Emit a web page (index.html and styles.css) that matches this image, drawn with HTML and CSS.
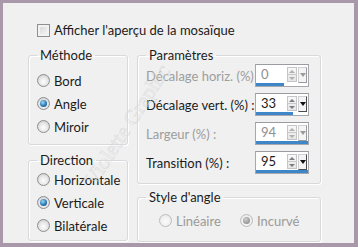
FILE: index.html
```html
<!DOCTYPE html>
<html>
<head>
    <meta charset="utf-8">
    <title>Mosaïque</title>
    <link rel="stylesheet" href="styles.css">
</head>
<body>
<div class="dlg">
    <div class="check"><span class="box"></span>Afficher l'aperçu de la mosaïque</div>

    <div class="cols">
        <div class="col left">
            <fieldset class="grp methode">
                <legend>Méthode</legend>
                <div class="opt"><span class="radio"></span>Bord</div>
                <div class="opt"><span class="radio on"></span>Angle</div>
                <div class="opt"><span class="radio"></span>Miroir</div>
            </fieldset>
            <fieldset class="grp direction">
                <legend>Direction</legend>
                <div class="opt"><span class="radio"></span>Horizontale</div>
                <div class="opt"><span class="radio on"></span>Verticale</div>
                <div class="opt"><span class="radio"></span>Bilatérale</div>
            </fieldset>
        </div>

        <div class="col right">
            <fieldset class="grp params">
                <legend>Paramètres</legend>
                <div class="row off">
                    <span class="lbl">Décalage horiz. (%) :</span>
                    <div class="spin">
                        <div class="top"><span class="val">0</span><span class="updown"><i class="up"></i><i class="dn"></i></span><span class="drop"></span></div>
                        <div class="bar" style="width: 28px"></div>
                    </div>
                </div>
                <div class="row">
                    <span class="lbl">Décalage vert. (%) :</span>
                    <div class="spin">
                        <div class="top"><span class="val">33</span><span class="updown"><i class="up"></i><i class="dn"></i></span><span class="drop"></span></div>
                        <div class="bar" style="width: 37px"></div>
                    </div>
                </div>
                <div class="row off">
                    <span class="lbl">Largeur (%) :</span>
                    <div class="spin">
                        <div class="top"><span class="val">94</span><span class="updown"><i class="up"></i><i class="dn"></i></span><span class="drop"></span></div>
                        <div class="bar" style="width: 52px"></div>
                    </div>
                </div>
                <div class="row">
                    <span class="lbl">Transition (%) :</span>
                    <div class="spin">
                        <div class="top"><span class="val">95</span><span class="updown"><i class="up"></i><i class="dn"></i></span><span class="drop"></span></div>
                        <div class="bar" style="width: 52px"></div>
                    </div>
                </div>
            </fieldset>
            <fieldset class="grp angle">
                <legend>Style d'angle</legend>
                <div class="hopts">
                    <div class="opt off lin"><span class="radio"></span>Linéaire</div>
                    <div class="opt off"><span class="radio on"></span>Incurvé</div>
                </div>
            </fieldset>
        </div>
    </div>

    <div class="mark">Violette Graphic</div>
</div>
</body>
</html>
```

FILE: styles.css
```css
*{
    margin: 0;
    padding: 0;
    box-sizing: border-box;
}
body{
    width: 358px;
    height: 247px;
    background: #a898aa;
    font-family: Lato, "Open Sans", sans-serif;
    font-size: 13px;
    color: #1b1b1b;
    white-space: nowrap;
}
.dlg{
    position: relative;
    width: 358px;
    height: 247px;
    border: solid #a898aa;
    border-width: 3px 4px 4px 3px;
    background: #f0f0f0;
    padding: 18px 0 0 25px;
    overflow: hidden;
}

/* case a cocher */
.check{
    display: flex;
    align-items: center;
    height: 18px;
    margin-left: 9px;
}
.check .box{
    width: 13px;
    height: 13px;
    margin-right: 4px;
    border: 1px solid #8e8f8f;
    background: linear-gradient(135deg, #d6d6d6, #f7f7f7);
    box-shadow: inset 0 0 0 2px #f2f2f2;
}

.cols{
    display: flex;
    gap: 9px;
    margin-top: 8px;
}
.col{
    display: flex;
    flex-direction: column;
}
.col.left{
    width: 100px;
    gap: 7px;
}
.col.right{
    width: 184px;
    gap: 5px;
}

/* group box */
.grp{
    border: 1px solid #d7d9dc;
    border-radius: 3px;
    box-shadow: inset 1px 1px 0 #fff, 1px 1px 0 #fff;
    padding: 0 0 0 8px;
}
.grp legend{
    line-height: 16px;
    padding: 0 3px;
    margin-left: 0;
}
.methode{
    height: 98px;
    padding-top: 6px;
}
.direction{
    height: 89px;
    padding-top: 0;
}
.params{
    height: 137px;
    padding-top: 1px;
}
.angle{
    height: 53px;
    padding-top: 4px;
}

/* boutons radio */
.opt{
    display: flex;
    align-items: center;
    height: 23px;
}
.radio{
    position: relative;
    width: 13px;
    height: 13px;
    margin-right: 4px;
    border: 1px solid #8d8d8d;
    border-radius: 50%;
    background: radial-gradient(circle at 50% 60%, #fdfdfd 0, #e9e9e9 45%, #c5c5c5 100%);
}
.radio.on:after{
    content: "";
    position: absolute;
    left: 2px;
    top: 2px;
    width: 7px;
    height: 7px;
    border-radius: 50%;
    background: radial-gradient(circle at 40% 35%, #9fd8f7 0, #2a7cb8 55%, #0e3f66 100%);
}
.opt.off{
    color: #9a9a9a;
}
.opt.off .radio{
    border-color: #bcbcbc;
    background: radial-gradient(circle at 50% 60%, #fbfbfb 0, #f1f1f1 50%, #e0e0e0 100%);
}
.opt.off .radio.on:after{
    background: radial-gradient(circle at 40% 35%, #d0d0d0 0, #9c9c9c 60%, #8a8a8a 100%);
}
.hopts{
    display: flex;
    padding-left: 13px;
}
.hopts .lin{
    width: 81px;
}

/* lignes parametres */
.row{
    display: flex;
    align-items: center;
    height: 23px;
    margin-top: 6px;
}
.row:first-of-type{
    margin-top: 0;
}
.row .lbl{
    width: 109px;
}
.row.off .lbl{
    color: #9d9d9d;
}

/* spin */
.spin{
    display: flex;
    flex-direction: column;
    width: 54px;
    height: 23px;
    border: 1px solid #a6a8ad;
    border-top-color: #9a9ca1;
    background: #fff;
}
.spin .top{
    flex: 1;
    display: flex;
    align-items: center;
    padding-left: 5px;
}
.spin .val{
    flex: 1;
    line-height: 16px;
}
.row.off .val{
    color: #8f8f8f;
}
.spin .updown{
    display: flex;
    flex-direction: column;
    width: 10px;
    height: 15px;
    margin-top: 1px;
    border: 1px solid #c3c5c9;
    background: linear-gradient(to bottom, #f8f8f8, #e6e6e6);
}
.spin .updown i{
    flex: 1;
    display: flex;
    align-items: center;
    justify-content: center;
}
.spin .updown .up{
    border-bottom: 1px solid #c8c8c8;
}
.spin .updown .up:before, .spin .updown .dn:before{
    content: "";
    border-left: 3px solid transparent;
    border-right: 3px solid transparent;
}
.spin .updown .up:before{
    border-bottom: 3px solid #7d7d7d;
}
.spin .updown .dn:before{
    border-top: 3px solid #7d7d7d;
}
.spin .drop{
    display: flex;
    align-items: center;
    justify-content: center;
    width: 9px;
    height: 16px;
    margin: 1px 1px 0 1px;
    border: 1px solid #d0d0d0;
    border-right-color: #4b4b4b;
    border-bottom-color: #4b4b4b;
    background: #f4f4f4;
}
.spin .drop:before{
    content: "";
    border-left: 3px solid transparent;
    border-right: 3px solid transparent;
    border-top: 4px solid #111;
}
.row.off .spin .updown .up:before{
    border-bottom-color: #b0b0b0;
}
.row.off .spin .updown .dn:before{
    border-top-color: #b0b0b0;
}
.row.off .spin .drop{
    border-right-color: #9a9a9a;
    border-bottom-color: #9a9a9a;
}
.row.off .spin .drop:before{
    border-top-color: #9a9a9a;
}
.spin .bar{
    height: 3px;
    background: #3d87c9;
}

/* filigrane */
.mark{
    position: absolute;
    left: 39px;
    top: 110px;
    width: 170px;
    line-height: 24px;
    text-align: center;
    font-family: "Liberation Serif", serif;
    font-size: 21px;
    color: transparent;
    -webkit-text-stroke: 0.5px #dadada;
    transform: rotate(-57deg);
    pointer-events: none;
}
```
